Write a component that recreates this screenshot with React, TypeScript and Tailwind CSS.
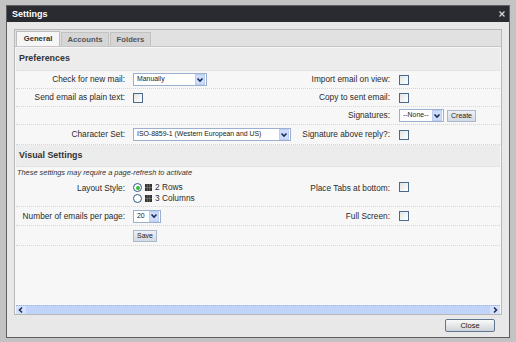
import React from 'react';

const Chevron = ({ dir }: { dir: 'down' | 'left' | 'right' }) => {
  const d =
    dir === 'down' ? 'M1.5 2.5 L4 5 L6.5 2.5' : dir === 'left' ? 'M5 1.5 L2.5 4 L5 6.5' : 'M3 1.5 L5.5 4 L3 6.5';
  return (
    <svg width="8" height="8" viewBox="0 0 8 8">
      <path d={d} fill="none" stroke="#1d2e57" strokeWidth="1.6" />
    </svg>
  );
};

const Select = ({ text, w }: { text: string; w: string }) => (
  <div className={`${w} h-[13px] border border-[#9bb0cf] bg-white flex items-center`}>
    <span className="flex-1 pl-[3px] text-[6.9px] text-[#222] whitespace-nowrap overflow-hidden leading-none">{text}</span>
    <span className="w-[10px] h-[11px] mr-[1px] bg-[#cddcfb] border border-[#bccdef] flex items-center justify-center">
      <Chevron dir="down" />
    </span>
  </div>
);

const Check = () => (
  <span className="block w-[10px] h-[10px] border border-[#4a6a8c] bg-gradient-to-br from-[#e4e4e4] to-white" />
);

const SmallButton = ({ label }: { label: string }) => (
  <span className="h-[12px] px-[3px] border border-[#a9b8cc] bg-gradient-to-b from-[#eef1f5] to-[#d3dae4] flex items-center text-[7px] text-[#222] leading-none">
    {label}
  </span>
);

const Radio = ({ on }: { on?: boolean }) => (
  <span className="w-[9px] h-[9px] rounded-full border border-[#2f5783] bg-white flex items-center justify-center">
    {on && <span className="w-[4px] h-[4px] rounded-full bg-[#2ebf34]" />}
  </span>
);

const GridIcon = () => (
  <svg width="7" height="7" viewBox="0 0 7 7" className="mx-[3px]">
    <rect x="0" y="0" width="7" height="7" fill="#333" />
    <path d="M0 3.5 H7 M2.3 0 V7 M4.7 0 V7" stroke="#888" strokeWidth="0.6" />
  </svg>
);

interface RowProps {
  label?: string;
  value?: React.ReactNode;
  label2?: string;
  value2?: React.ReactNode;
  h: string;
  top?: boolean;
}

const Row = ({ label, value, label2, value2, h, top }: RowProps) => (
  <div className={`flex ${h} ${top ? 'items-start pt-[3px]' : 'items-center'} border-b border-dotted border-[#c9d8e1]`}>
    <div className="w-[111px] pr-[2px] text-right text-[8.3px] text-[#2a2a2a] whitespace-nowrap">{label}</div>
    <div className="w-[168px] pl-[6px] flex items-center">{value}</div>
    <div className="w-[97px] pr-[2px] text-right text-[8.3px] text-[#2a2a2a] whitespace-nowrap">{label2}</div>
    <div className="pl-[7px] flex items-center gap-[3px]">{value2}</div>
  </div>
);

const Header = ({ title, h }: { title: string; h: string }) => (
  <div className={`${h} bg-[#ececec] flex items-center pl-[3px] text-[8.9px] font-bold text-[#333] border-b border-dotted border-[#d6dde2]`}>
    {title}
  </div>
);

export default function App() {
  return (
    <div className="w-[516px] h-[342px] bg-[#c3c3c3] pt-[5px] pl-[6px] pr-[6px] pb-[4px] font-['Liberation_Sans',Arial,sans-serif]">
      <div className="h-[333px] border border-[#5f5f5f] flex flex-col bg-[#e8e8e8]">
        {/* title bar */}
        <div className="h-[16px] bg-[#2a2a31] flex items-center justify-between pl-[5px] pr-[4px]">
          <span className="text-white text-[9px] font-bold leading-none">Settings</span>
          <span className="w-[6px] h-[6px] flex items-center justify-center">
            <svg width="6" height="6" viewBox="0 0 6 6">
              <path d="M0.5 0.5 L5.5 5.5 M5.5 0.5 L0.5 5.5" stroke="#d8d8d8" strokeWidth="1.3" />
            </svg>
          </span>
        </div>

        {/* body */}
        <div className="flex-1 flex flex-col pt-[7px] pl-[7px] pr-[7px]">
          <div className="h-[286px] border border-[#b8b8b8] flex flex-col bg-[#f7f7f7]">
            {/* tabs */}
            <div className="h-[17px] bg-[#e1e1e1] border-b border-[#c6c6c6] flex items-end pl-[1px] gap-[1px]">
              <div className="h-[15px] w-[44px] bg-[#f6f6f6] border border-b-0 border-[#bdbdbd] flex items-center justify-center text-[7.7px] font-bold text-[#333]">
                General
              </div>
              <div className="h-[14px] w-[48px] bg-[#d6d6d6] border border-b-0 border-[#c2c2c2] flex items-center justify-center text-[7.7px] font-bold text-[#555]">
                Accounts
              </div>
              <div className="h-[14px] w-[41px] bg-[#d6d6d6] border border-b-0 border-[#c2c2c2] flex items-center justify-center text-[7.7px] font-bold text-[#555]">
                Folders
              </div>
            </div>

            {/* content */}
            <div className="flex-1 flex flex-col px-[1px] pt-[1px]">
              <Header title="Preferences" h="h-[23px]" />
              <Row
                h="h-[18px]"
                label="Check for new mail:"
                value={<Select text="Manually" w="w-[74px]" />}
                label2="Import email on view:"
                value2={<Check />}
              />
              <Row
                h="h-[18px]"
                label="Send email as plain text:"
                value={<Check />}
                label2="Copy to sent email:"
                value2={<Check />}
              />
              <Row
                h="h-[18px]"
                label2="Signatures:"
                value2={
                  <>
                    <Select text="--None--" w="w-[45px]" />
                    <SmallButton label="Create" />
                  </>
                }
              />
              <Row
                h="h-[20px]"
                label="Character Set:"
                value={<Select text="ISO-8859-1 (Western European and US)" w="w-[158px]" />}
                label2="Signature above reply?:"
                value2={<Check />}
              />
              <Header title="Visual Settings" h="h-[22px]" />
              <div className="h-[12px] flex items-center pl-[1px] text-[7.4px] italic text-[#333] whitespace-nowrap">
                These settings may require a page-refresh to activate
              </div>
              <Row
                h="h-[28px]"
                top
                label="Layout Style:"
                value={
                  <div className="flex flex-col text-[8.3px] text-[#2a2a2a] leading-[11px]">
                    <div className="flex items-center">
                      <Radio on />
                      <GridIcon />
                      <span>2 Rows</span>
                    </div>
                    <div className="flex items-center">
                      <Radio />
                      <GridIcon />
                      <span>3 Columns</span>
                    </div>
                  </div>
                }
                label2="Place Tabs at bottom:"
                value2={<Check />}
              />
              <Row
                h="h-[19px]"
                label="Number of emails per page:"
                value={<Select text="20" w="w-[28px]" />}
                label2="Full Screen:"
                value2={<Check />}
              />
              <Row h="h-[20px]" value={<SmallButton label="Save" />} />

              {/* horizontal scrollbar */}
              <div className="mt-auto h-[9px] bg-[#c0d3f8] border-t border-dotted border-[#9fb5e0] flex items-center justify-between">
                <span className="w-[10px] h-[8px] bg-[#d6e2fb] flex items-center justify-center">
                  <Chevron dir="left" />
                </span>
                <span className="w-[10px] h-[8px] bg-[#d6e2fb] flex items-center justify-center">
                  <Chevron dir="right" />
                </span>
              </div>
            </div>
          </div>

          {/* footer */}
          <div className="flex justify-end pt-[4px] pr-[7px]">
            <span className="w-[50px] h-[13px] rounded-[2px] border border-[#5f7690] bg-gradient-to-b from-[#fafafa] to-[#cfd3d8] flex items-center justify-center text-[7.5px] text-[#222] leading-none">
              Close
            </span>
          </div>
        </div>
      </div>
    </div>
  );
}
